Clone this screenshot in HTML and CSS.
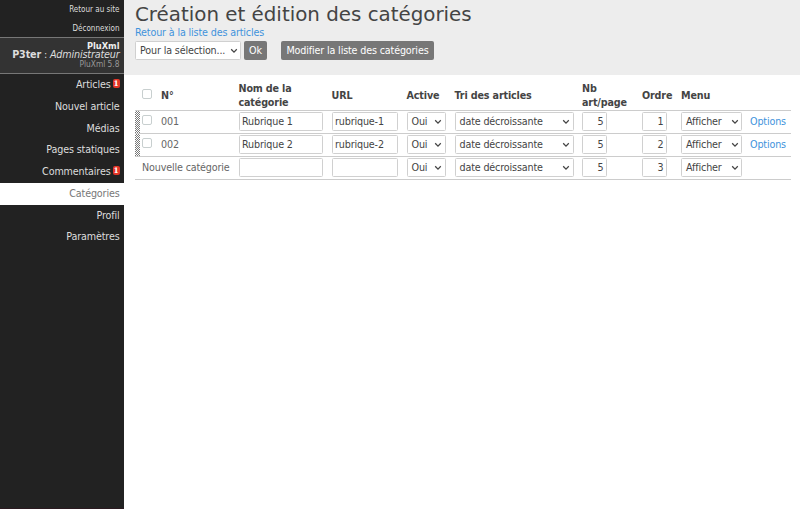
FILE: index.html
```
<!DOCTYPE html>
<html lang="fr">
<head>
<meta charset="utf-8">
<title>Catégories</title>
<link rel="stylesheet" href="styles.css">
</head>
<body>
<svg width="0" height="0" class="defs"><symbol id="chev" viewBox="0 0 8 6"><path d="M1.2 1.2 4 4.1 6.8 1.2" fill="none" stroke="#444" stroke-width="1.25"/></symbol></svg>
<aside class="aside">
  <ul class="top"><li><a>Retour au site</a></li><li><a>Déconnexion</a></li></ul>
  <div class="profile">
    <div class="site">PluXml</div>
    <div class="user"><strong>P3ter</strong> : <em>Administrateur</em></div>
    <div class="version">PluXml 5.8</div>
  </div>
  <ul class="menu">
    <li><a>Articles</a><span class="badge">1</span></li>
    <li><a>Nouvel article</a></li>
    <li><a>Médias</a></li>
    <li><a>Pages statiques</a></li>
    <li><a>Commentaires</a><span class="badge">1</span></li>
    <li class="active"><a>Catégories</a></li>
    <li><a>Profil</a></li>
    <li><a>Paramètres</a></li>
  </ul>
</aside>
<main class="main">
  <header class="action-bar">
    <h1>Création et édition des catégories</h1>
    <p><a class="link">Retour à la liste des articles</a></p>
    <div class="buttons">
      <span class="select bulk">Pour la sélection...<svg><use href="#chev"/></svg></span>
      <button class="ok">Ok</button>
      <button class="update">Modifier la liste des catégories</button>
    </div>
  </header>
  <table>
    <colgroup><col class="c-check"><col class="c-id"><col class="c-name"><col class="c-url"><col class="c-active"><col class="c-sort"><col class="c-nb"><col class="c-order"><col class="c-menu"><col class="c-opt"></colgroup>
    <thead>
      <tr><th class="first"><i class="check"></i></th><th>N°</th><th>Nom de la<br>catégorie</th><th>URL</th><th>Active</th><th>Tri des articles</th><th>Nb<br>art/page</th><th>Ordre</th><th>Menu</th><th></th></tr>
    </thead>
    <tbody>
      <tr><td class="first drag"><i class="check"></i></td><td>001</td><td><input class="name" value="Rubrique 1"></td><td><input class="url" value="rubrique-1"></td><td><span class="select yes">Oui<svg><use href="#chev"/></svg></span></td><td><span class="select sort">date décroissante<svg><use href="#chev"/></svg></span></td><td><input class="num" value="5"></td><td><input class="num" value="1"></td><td><span class="select show">Afficher<svg><use href="#chev"/></svg></span></td><td><a class="link">Options</a></td></tr>
      <tr><td class="first drag"><i class="check"></i></td><td>002</td><td><input class="name" value="Rubrique 2"></td><td><input class="url" value="rubrique-2"></td><td><span class="select yes">Oui<svg><use href="#chev"/></svg></span></td><td><span class="select sort">date décroissante<svg><use href="#chev"/></svg></span></td><td><input class="num" value="5"></td><td><input class="num" value="2"></td><td><span class="select show">Afficher<svg><use href="#chev"/></svg></span></td><td><a class="link">Options</a></td></tr>
      <tr><td class="first" colspan="2">Nouvelle catégorie</td><td><input class="name"></td><td><input class="url"></td><td><span class="select yes">Oui<svg><use href="#chev"/></svg></span></td><td><span class="select sort">date décroissante<svg><use href="#chev"/></svg></span></td><td><input class="num" value="5"></td><td><input class="num" value="3"></td><td><span class="select show">Afficher<svg><use href="#chev"/></svg></span></td><td></td></tr>
    </tbody>
  </table>
</main>
</body>
</html>
```
FILE: styles.css
```
* { box-sizing: border-box; }
body { margin: 0; display: flex; height: 509px; overflow: hidden; background: #fff; color: #666; font: 9.6px/14px "DejaVu Sans", sans-serif; letter-spacing: -.15px; }
.defs { display: none; }
ul, p, h1 { margin: 0; padding: 0; list-style: none; }
.aside { width: 124px; flex: none; background: #222; color: #ddd; text-align: right; border-bottom: 1px solid #2b1a20; }
.top, .site, .version { font-family: "DejaVu Sans Condensed", "DejaVu Sans", sans-serif; font-stretch: condensed; letter-spacing: 0; }
.top { height: 37px; font-size: 8px; }
.top li { height: 18.5px; line-height: 19px; padding-right: 4.5px; }
.profile { height: 37px; background: #333; border-top: 1px solid #777; border-bottom: 1px solid #777; padding: 4px 4.5px 0 0; white-space: nowrap; }
.site { font-weight: bold; font-size: 9.2px; line-height: 8px; color: #eee; }
.user { line-height: 9px; color: #ddd; }
.version { font-size: 8.3px; line-height: 11px; color: #999; }
.menu li { height: 21.75px; line-height: 21px; padding-right: 4.5px; display: flex; justify-content: flex-end; }
.menu .active { background: #fff; color: #777; }
.badge { background: #e43527; color: #fff; font: bold 7.5px/9px "DejaVu Serif", serif; width: 7px; height: 9px; border-radius: 2px; text-align: center; margin: 4.5px 0 0 2px; }
.main { flex: 1; min-width: 0; }
.action-bar { background: #ededed; height: 74.5px; padding: 0 11px; }
h1 { font-size: 19.85px; line-height: 26px; padding-top: 2px; margin-bottom: -1px; font-weight: normal; letter-spacing: 0; color: #444; white-space: nowrap; }
.action-bar p { line-height: 11px; margin-top: -1px; }
.link { color: #3f93dc; }
.buttons { display: flex; margin-top: 3px; }
.select { display: flex; align-items: center; justify-content: space-between; height: 19px; border: 1px solid #d0d0d0; border-radius: 1.5px; background: #fff; color: #444; padding: 0 2.5px 0 4px; white-space: nowrap; }
.select svg { width: 8px; height: 6px; flex: none; }
.bulk { width: 106px; }
button { font: inherit; letter-spacing: inherit; color: #fff; background: #777; border: 0; border-radius: 2px; height: 19px; padding: 0; white-space: nowrap; }
.ok { width: 23px; margin-left: 3px; }
.update { width: 153px; margin-left: 14px; }
table { table-layout: fixed; width: 655.5px; margin: 7px 0 0 11px; border-collapse: separate; border-spacing: 0; }
th, td { padding: 0; text-align: left; border-bottom: 1px solid #ccc; height: 23px; vertical-align: middle; white-space: nowrap; }
th { height: 29px; color: #444; }
.first { padding-left: 7px; }
.c-check { width: 26px; }
.c-id { width: 77.5px; }
.c-name { width: 93px; }
.c-url { width: 75px; }
.c-active { width: 48px; }
.c-sort { width: 127.5px; }
.c-nb { width: 60px; }
.c-order { width: 39px; }
.c-menu { width: 69px; }
.c-opt { width: 40.5px; }
.drag { background: linear-gradient(90deg, transparent 5px, #fff 5px), repeating-conic-gradient(#777 0 25%, #fff 0 50%) 0 0 / 2px 2px; }
.check { display: block; width: 10px; height: 10px; border: 1px solid #c8cfcf; border-radius: 2px; background: #fff; margin-top: -3px; }
input { display: block; font: inherit; letter-spacing: inherit; color: #444; height: 19px; border: 1px solid #d0d0d0; border-radius: 1.5px; padding: 0 2.5px; margin: 0; background: #fff; }
.name { width: 84.5px; }
.url { width: 66.5px; }
.num { width: 25px; text-align: right; }
.yes { width: 39px; }
.sort { width: 119px; }
.show { width: 61px; }
```
